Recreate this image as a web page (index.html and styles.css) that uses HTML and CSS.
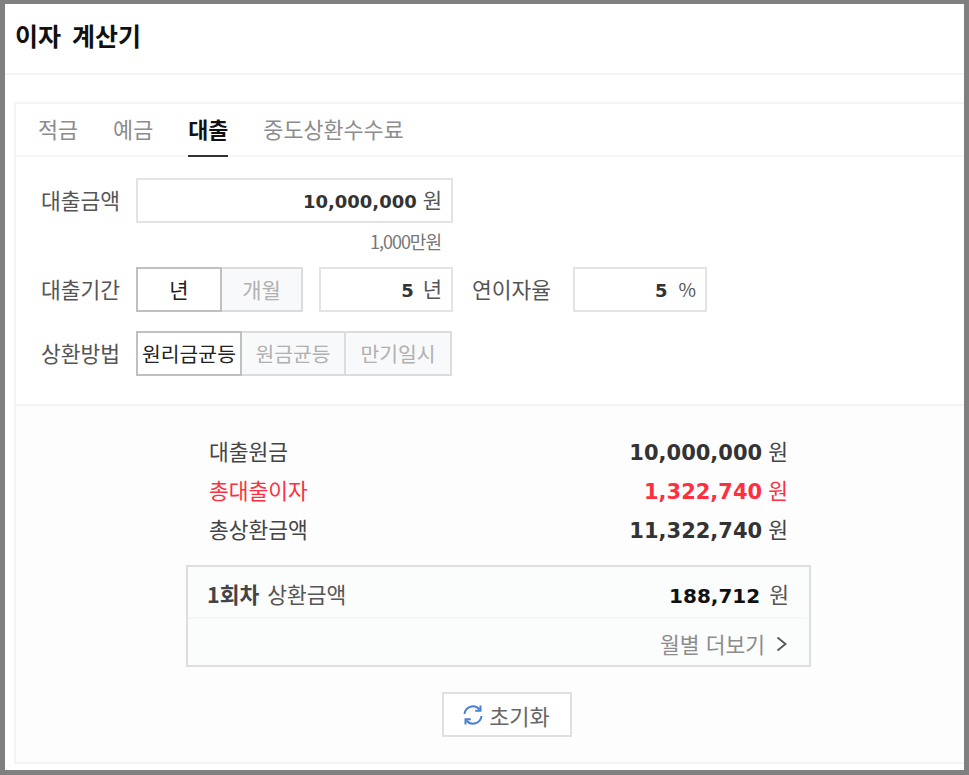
FILE: index.html
```html
<!DOCTYPE html>
<html lang="ko">
<head>
    <meta charset="UTF-8">
    <meta name="viewport" content="width=device-width, initial-scale=1.0">
    <title>이자 계산기</title>
    <link rel="stylesheet" href="styles.css">
</head>
<body>

<div class="frame">
    <h1 class="page-title">이자 계산기</h1>

    <div class="panel">
        <!-- 탭 -->
        <ul class="tabs">
            <li>적금</li>
            <li>예금</li>
            <li class="active">대출</li>
            <li>중도상환수수료</li>
        </ul>

        <!-- 입력 -->
        <div class="form">
            <div class="form-row">
                <span class="form-label">대출금액</span>
                <div class="field field-amount"><b>10,000,000</b> <span class="unit">원</span></div>
            </div>
            <p class="hint">1,000만원</p>

            <div class="form-row">
                <span class="form-label">대출기간</span>
                <div class="segments">
                    <span class="segment segment-year selected">년</span>
                    <span class="segment segment-month">개월</span>
                </div>
                <div class="field field-term"><b>5</b> <span class="unit unit-gap">년</span></div>
                <span class="form-label form-label-rate">연이자율</span>
                <div class="field field-rate"><b>5</b> <span class="unit unit-gap unit-pct">%</span></div>
            </div>

            <div class="form-row form-row-last">
                <span class="form-label">상환방법</span>
                <div class="segments">
                    <span class="segment segment-a selected">원리금균등</span>
                    <span class="segment segment-b">원금균등</span>
                    <span class="segment segment-c">만기일시</span>
                </div>
            </div>
        </div>

        <!-- 결과 -->
        <div class="result">
            <div class="result-row">
                <span>대출원금</span>
                <span><b>10,000,000</b> 원</span>
            </div>
            <div class="result-row red">
                <span>총대출이자</span>
                <span><b>1,322,740</b> 원</span>
            </div>
            <div class="result-row">
                <span>총상환금액</span>
                <span><b>11,322,740</b> 원</span>
            </div>

            <div class="month-box">
                <div class="month-top">
                    <span class="month-name"><b class="round">1회차</b> 상환금액</span>
                    <span><b class="month-value">188,712</b> <span class="month-unit">원</span></span>
                </div>
                <div class="month-more">
                    월별 더보기
                    <svg width="12" height="16" viewBox="0 0 12 16" fill="none" stroke="#555" stroke-width="1.8">
                        <path d="M1.5 1.5 L9.5 8 L1.5 14.5"/>
                    </svg>
                </div>
            </div>

            <button class="reset" type="button">
                <svg width="22" height="22" viewBox="0 0 22 22" fill="none" stroke="#4a7fd6" stroke-width="2">
                    <path d="M2.5 10 A8.5 8.5 0 0 1 17.5 5.5"/>
                    <path d="M18.5 1.5 V6.8 H13.2"/>
                    <path d="M19.5 12 A8.5 8.5 0 0 1 4.5 16.5"/>
                    <path d="M3.5 20.5 V15.2 H8.8"/>
                </svg>
                초기화
            </button>
        </div>
    </div>
</div>

</body>
</html>
```

FILE: styles.css
```css
* {
    box-sizing: border-box;
}
body {
    margin: 0;
    padding: 0;
    font-family: "Noto Sans CJK KR", "Noto Sans", sans-serif;
    color: #555;
    background-color: #808080;
}
.frame {
    height: 770px;
    margin-bottom: 5px;
    margin-right: 5px;
    border-top: 4px solid #808080;
    border-left: 5px solid #808080;
    background-color: white;
    overflow: hidden;
}
.page-title {
    margin: 0;
    height: 71px;
    padding: 0 0 0 10px;
    font-size: 25px;
    line-height: 62px;
    font-weight: 700;
    word-spacing: 4px;
    color: #111;
    border-bottom: 2px solid #f4f4f4;
}
.panel {
    margin: 27px 0 0 9px;
    height: 662px;
    border: 2px solid #f3f3f3;
    border-right: none;
    display: flex;
    flex-direction: column;
}
.tabs {
    display: flex;
    gap: 35px;
    list-style: none;
    margin: 0;
    padding: 0 0 0 22px;
    height: 53px;
    border-bottom: 2px solid #f5f5f5;
    font-size: 21.8px;
    color: #8c8c8c;
}
.tabs li {
    height: 53px;
    line-height: 50px;
}
.tabs .active {
    color: #111;
    font-weight: 700;
    border-bottom: 2px solid #333;
}
.form {
    padding: 21px 0 0 25px;
    height: 249px;
    border-bottom: 2px solid #f3f3f3;
}
.form-row {
    display: flex;
    align-items: center;
    height: 45px;
}
.form-row-last {
    margin-top: 19px;
}
.form-label {
    width: 95px;
    padding-bottom: 2px;
    font-size: 21.5px;
    color: #555;
}
.form-label-rate {
    width: 101px;
    margin-left: 19px;
}
.field {
    height: 45px;
    border: 2px solid #e3e3e5;
    text-align: right;
    padding-right: 9px;
    font-size: 21px;
    line-height: 39px;
    background-color: white;
}
.field b {
    font-family: "DejaVu Sans", sans-serif;
    font-size: 18px;
    color: #333;
}
.field-amount {
    width: 317px;
}
.field-term {
    width: 134px;
    margin-left: 16px;
}
.field-term .unit-gap {
    margin-left: 3px;
}
.field-rate {
    width: 134px;
    padding-right: 9px;
}
.unit-gap {
    margin-left: 5px;
}
.unit-pct {
    font-size: 19px;
}
.hint {
    margin: 7px 0 15px;
    width: 400px;
    height: 22px;
    text-align: right;
    font-size: 18px;
    line-height: 22px;
    letter-spacing: -1px;
    color: #777;
}
.segments {
    display: flex;
    height: 45px;
}
.segment {
    display: block;
    height: 45px;
    border: 2px solid #dcdcdc;
    border-left: none;
    background-color: #f8f9fa;
    color: #b0b0b0;
    font-size: 21px;
    line-height: 41px;
    text-align: center;
    white-space: nowrap;
}
.segment.selected {
    border: 2px solid #c0c0c0;
    background-color: white;
    color: #222;
}
.segment-year {
    width: 86px;
}
.segment-month {
    width: 81px;
}
.segment-a,
.segment-b,
.segment-c {
    font-size: 20.4px;
}
.segment-a {
    width: 106px;
}
.segment-b {
    width: 104px;
}
.segment-c {
    width: 106px;
}
.result {
    flex: 1;
    padding: 25px 0 0 170px;
    background-color: #fdfdfd;
}
.result-row {
    display: flex;
    justify-content: space-between;
    align-items: center;
    width: 625px;
    height: 39px;
    padding: 0 23px;
    font-size: 21.5px;
    color: #444;
}
.result-row b {
    font-family: "DejaVu Sans", sans-serif;
    font-size: 21px;
    color: #333;
}
.result-row.red,
.result-row.red b {
    color: #ff2f3f;
}
.month-box {
    width: 625px;
    height: 102px;
    margin-top: 17px;
    border: 2px solid #dedede;
    background-color: #fbfcfc;
    padding: 0 21px 0 19px;
}
.month-top {
    display: flex;
    justify-content: space-between;
    align-items: center;
    height: 52px;
    margin: 0 -19px 0 -19px;
    padding: 3px 18px 0 19px;
    border-bottom: 2px solid #f5f6f6;
    font-size: 21.5px;
    color: #555;
}
.month-name {
    word-spacing: 2px;
}
.month-top .round {
    font-weight: 700;
    color: #444;
}
.month-value {
    font-family: "DejaVu Sans", sans-serif;
    font-size: 20px;
    color: #111;
}
.month-unit {
    margin-left: 3px;
}
.month-more {
    display: flex;
    justify-content: flex-end;
    align-items: center;
    gap: 11px;
    height: 46px;
    padding-top: 3px;
    font-size: 21.5px;
    color: #8c8c8c;
}
.reset {
    display: flex;
    align-items: center;
    justify-content: center;
    gap: 5px;
    width: 130px;
    height: 45px;
    margin: 25px 0 0 256px;
    padding: 0 2px 0 0;
    border: 2px solid #e0e0e0;
    background-color: white;
    font-family: inherit;
    font-size: 22px;
    color: #666;
}
```
